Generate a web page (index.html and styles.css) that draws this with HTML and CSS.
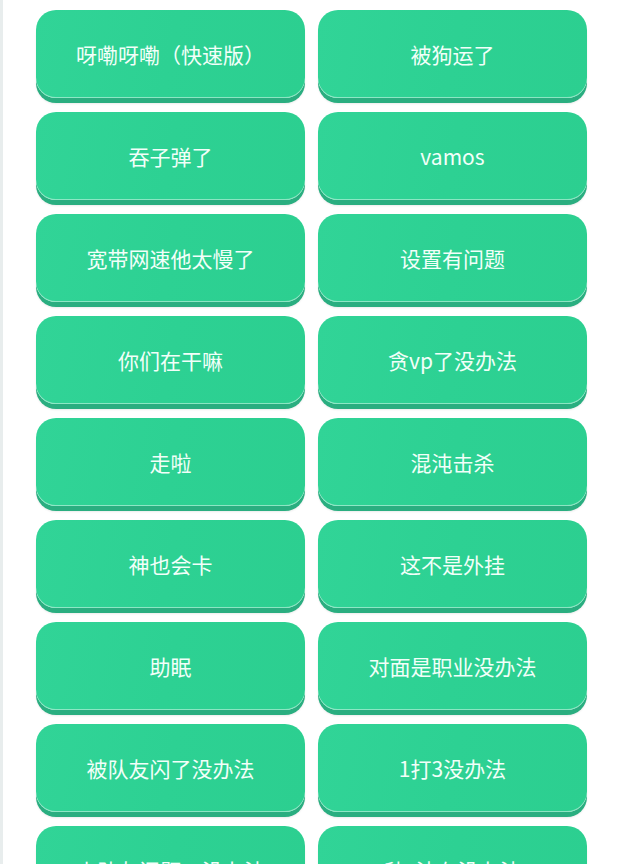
FILE: index.html
```html
<!DOCTYPE html>
<html lang="zh">
<head>
<meta charset="utf-8">
<link rel="stylesheet" href="styles.css">
</head>
<body>
<div class="page">
  <div class="edge"></div>
  <div class="grid">
    <div class="btn">呀嘞呀嘞（快速版）</div>
    <div class="btn">被狗运了</div>
    <div class="btn">吞子弹了</div>
    <div class="btn">vamos</div>
    <div class="btn">宽带网速他太慢了</div>
    <div class="btn">设置有问题</div>
    <div class="btn">你们在干嘛</div>
    <div class="btn">贪vp了没办法</div>
    <div class="btn">走啦</div>
    <div class="btn">混沌击杀</div>
    <div class="btn">神也会卡</div>
    <div class="btn">这不是外挂</div>
    <div class="btn">助眠</div>
    <div class="btn">对面是职业没办法</div>
    <div class="btn">被队友闪了没办法</div>
    <div class="btn">1打3没办法</div>
    <div class="btn">小队友问题，没办法</div>
    <div class="btn">秒c渣在没办法</div>
  </div>
</div>
</body>
</html>
```
FILE: styles.css
```css
html, body {
  margin: 0;
  padding: 0;
  background: #ffffff;
  height: 864px;
  overflow: hidden;
}
.page {
  display: flex;
  height: 864px;
}
.edge {
  width: 3px;
  flex: none;
  background: #e8eded;
}
.grid {
  display: grid;
  grid-template-columns: 269px 269px;
  column-gap: 13px;
  row-gap: 14px;
  padding: 10px 0 0 33px;
  align-content: start;
}
.btn {
  height: 88px;
  border-radius: 20px;
  background: linear-gradient(100deg, #31d497 0%, #2dd193 50%, #2ccf90 100%);
  box-shadow: inset 0 -1px 0 rgba(255, 255, 255, 0.45), 0 5px 0 #2aae80, 0 6px 2px rgba(0, 0, 0, 0.08);
  color: #f2fff9;
  font-family: "Noto Sans CJK SC", "Noto Sans", sans-serif;
  font-size: 21px;
  display: flex;
  align-items: center;
  justify-content: center;
}
```
